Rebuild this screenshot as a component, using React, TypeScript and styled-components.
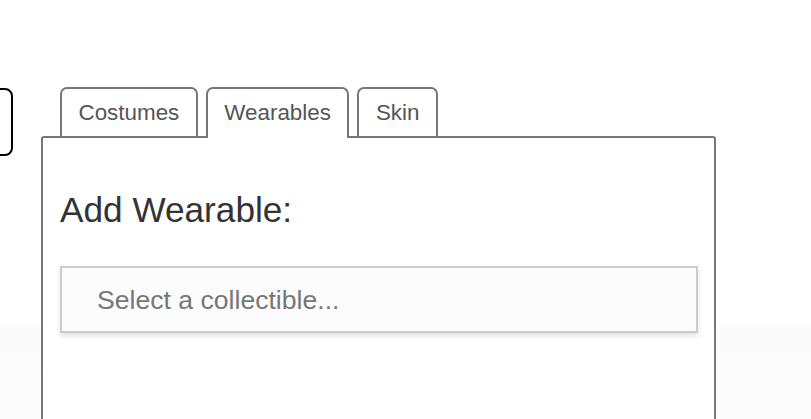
import React, { useState } from "react";
import styled, { createGlobalStyle } from "styled-components";

const GlobalStyle = createGlobalStyle`
  html, body {
    margin: 0;
    padding: 0;
    overflow: hidden;
  }
  body {
    font-family: "Liberation Sans", Arial, sans-serif;
    background: linear-gradient(180deg, #ffffff 0, #ffffff 326px, #fafafa 328px, #fcfcfc 100%);
    min-height: 419px;
  }
`;

const Page = styled.div`
  display: flex;
  align-items: flex-start;
  padding-top: 87px;
  height: 419px;
  box-sizing: border-box;
  overflow: hidden;
`;

// bout d'un bouton qui dépasse à gauche
const SideBox = styled.div`
  flex: 0 0 auto;
  width: 60px;
  height: 68px;
  margin-top: 1px;
  margin-left: -47px;
  margin-right: 28px;
  border: 2px solid #000;
  border-radius: 8px;
  box-sizing: border-box;
  background: #fff;
`;

const TabArea = styled.div`
  display: flex;
  flex-direction: column;
  width: 675px;
`;

const TabStrip = styled.div`
  display: flex;
  align-items: flex-start;
  gap: 8px;
  padding-left: 19px;
`;

const Tab = styled.button<{ $active?: boolean }>`
  position: relative;
  z-index: ${(p) => (p.$active ? 2 : 0)};
  height: ${(p) => (p.$active ? "51px" : "49px")};
  margin-bottom: ${(p) => (p.$active ? "-2px" : "0")};
  padding: 1px 16.5px 0;
  border: 2px solid #777;
  border-bottom: none;
  border-radius: 7px 7px 0 0;
  background: #fff;
  color: #555;
  font-family: "Liberation Sans", Arial, sans-serif;
  font-size: 22.4px;
  line-height: 46px;
  cursor: pointer;
  display: flex;
  align-items: flex-start;
`;

const Panel = styled.div`
  position: relative;
  z-index: 1;
  border: 2px solid #777;
  border-radius: 3px 3px 0 0;
  background: #fff;
  min-height: 320px;
  padding: 52px 16px 0 17px;
  box-sizing: border-box;
`;

const Heading = styled.h2`
  margin: 0 0 36px;
  font-weight: normal;
  font-size: 35.2px;
  line-height: 40px;
  color: #333;
`;

const CollectibleInput = styled.input`
  display: block;
  width: 100%;
  height: 67px;
  box-sizing: border-box;
  border: 2px solid #ccc;
  background: #fcfcfc;
  padding: 2px 0 0 35px;
  font-family: "Liberation Sans", Arial, sans-serif;
  font-size: 26.6px;
  color: #333;
  box-shadow: 0 3px 5px rgba(0, 0, 0, 0.12);
  outline: none;

  &::placeholder {
    color: #777;
  }
`;

const tabs = ["Costumes", "Wearables", "Skin"];

export default function App() {
  const [ativa, setAtiva] = useState("Wearables");

  return (
    <>
      <GlobalStyle />
      <Page>
        <SideBox />
        <TabArea>
          <TabStrip>
            {tabs.map((t) => (
              <Tab key={t} $active={t === ativa} onClick={() => setAtiva(t)}>
                {t}
              </Tab>
            ))}
          </TabStrip>
          <Panel>
            <Heading>Add Wearable:</Heading>
            <CollectibleInput placeholder="Select a collectible..." />
          </Panel>
        </TabArea>
      </Page>
    </>
  );
}
